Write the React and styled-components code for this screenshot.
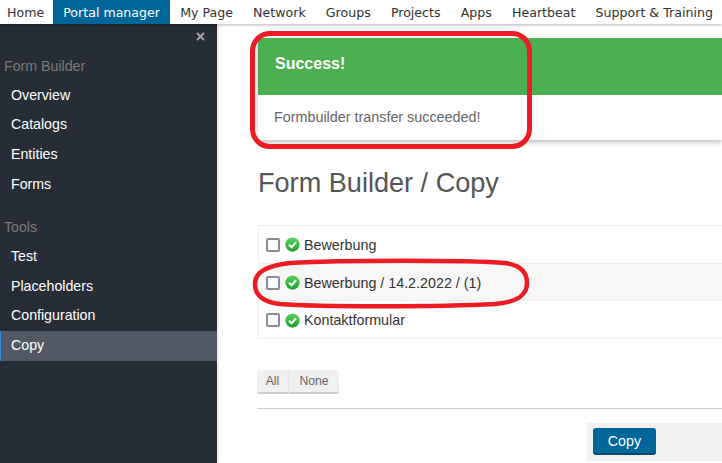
import React from 'react';
import styled, { createGlobalStyle } from 'styled-components';

const GlobalStyle = createGlobalStyle`
  html, body {
    margin: 0;
    padding: 0;
    height: 100%;
    overflow: hidden;
    background: #fff;
    font-family: "Liberation Sans", Arial, sans-serif;
  }
`;

const Page = styled.div`
  position: relative;
  width: 722px;
  height: 463px;
  overflow: hidden;
`;

const TopBar = styled.nav`
  position: relative;
  z-index: 2;
  display: flex;
  height: 24px;
  background: #fff;
  box-shadow: 0 1px 3px rgba(0, 0, 0, 0.3);
  font-family: "DejaVu Sans", Verdana, sans-serif;
  font-size: 12.6px;
  white-space: nowrap;
`;

const TopLink = styled.a`
  display: flex;
  align-items: center;
  padding: 0 ${props => props.$first ? '9px' : '10.15px'} 0 ${props => props.$first ? '7px' : '10px'};
  color: ${props => props.$active ? '#fff' : '#333'};
  background: ${props => props.$active ? '#006699' : 'transparent'};
`;

const Body = styled.div`
  display: flex;
  height: 439px;
`;

const Sidebar = styled.aside`
  position: relative;
  flex: 0 0 217px;
  box-sizing: border-box;
  padding-top: 26.7px;
  background: #262d36;
  box-shadow: 1px 0 4px rgba(0, 0, 0, 0.12);
`;

const CloseIcon = styled.svg`
  position: absolute;
  top: 8px;
  right: 12px;
  width: 9px;
  height: 9px;
`;

const SectionTitle = styled.div`
  height: 30px;
  margin-top: ${props => props.$gap || '0'};
  padding-left: 4px;
  font-size: 14.2px;
  line-height: 30px;
  color: #7b7b7b;
`;

const SideLink = styled.a`
  display: block;
  height: 29.7px;
  padding-left: ${props => props.$active ? '10px' : '11px'};
  border-left: ${props => props.$active ? '1px solid #2a93d5' : '0'};
  background: ${props => props.$active ? '#525964' : 'transparent'};
  font-size: 14.2px;
  line-height: 29px;
  color: #fff;
`;

const Main = styled.main`
  flex: 1;
  min-width: 0;
  padding: 14px 0 0 41px;
`;

const Alert = styled.section`
  height: 102px;
  background: #fff;
  box-shadow: 0 2px 5px rgba(0, 0, 0, 0.28);
`;

const AlertHead = styled.div`
  height: 57px;
  padding-left: 17px;
  background: #4caf50;
  font-size: 16px;
  font-weight: bold;
  line-height: 51px;
  color: #fff;
`;

const AlertBody = styled.div`
  padding-left: 16px;
  font-size: 14.35px;
  line-height: 44px;
  color: #666;
`;

const Title = styled.h1`
  margin: 27px 0 0;
  font-size: 27.1px;
  font-weight: normal;
  line-height: 32px;
  color: #555;
`;

const FormList = styled.ul`
  margin: 26px 0 0;
  padding: 0;
  list-style: none;
  border: 1px solid #eee;
  border-right: 0;
`;

const FormRow = styled.li`
  display: flex;
  align-items: center;
  box-sizing: border-box;
  height: 37.3px;
  padding: ${props => props.$first ? '0' : '2px'} 0 0 7px;
  background: ${props => props.$shaded ? '#f7f7f7' : '#fff'};
  border-top: ${props => props.$shaded ? '1px solid #eee' : '0'};
  border-bottom: ${props => props.$shaded ? '1px solid #eee' : '0'};
  font-size: 14.3px;
  color: #333;
`;

const CheckBox = styled.span`
  flex: 0 0 auto;
  box-sizing: border-box;
  width: 14px;
  height: 14px;
  margin-right: 5px;
  border: 2px solid #8a8a9a;
  border-radius: 2px;
  background: #fff;
`;

const StatusIcon = styled.svg`
  flex: 0 0 auto;
  width: 15px;
  height: 15px;
  margin-right: 4px;
`;

const ButtonGroup = styled.div`
  display: inline-flex;
  margin: 31px 0 0 -1px;
  vertical-align: top;
`;

const GroupButton = styled.button`
  box-sizing: border-box;
  height: 24px;
  width: ${props => props.$width};
  padding: 0;
  border: 0;
  border-right: ${props => props.$divider ? '1px solid #e6e6e6' : '0'};
  border-bottom: 2px solid #ccc;
  border-radius: ${props => props.$divider ? '3px 0 0 3px' : '0 3px 3px 0'};
  background: #f0f0f0;
  font-family: inherit;
  font-size: 12.2px;
  color: #666;
`;

const Divider = styled.hr`
  height: 1px;
  margin: 14px 0 0 -1px;
  border: 0;
  background: #ccc;
`;

const ActionBar = styled.div`
  display: flex;
  align-items: center;
  height: 38px;
  margin: 14px 0 0 329px;
  padding-left: 6px;
  background: #f1f1f1;
`;

const PrimaryButton = styled.button`
  box-sizing: border-box;
  width: 63px;
  height: 27px;
  padding: 0;
  border: 0;
  border-bottom: 2px solid #004a70;
  border-radius: 3px;
  background: #006699;
  font-family: inherit;
  font-size: 14.3px;
  color: #fff;
`;

const AlertMark = styled.div`
  position: absolute;
  z-index: 3;
  left: 250px;
  top: 31px;
  width: 282px;
  height: 118px;
  box-sizing: border-box;
  border: 5px solid #ed1c24;
  border-radius: 20px;
  pointer-events: none;
`;

const RowMark = styled.svg`
  position: absolute;
  z-index: 3;
  left: 250px;
  top: 258px;
  width: 282px;
  height: 52px;
  pointer-events: none;
`;

const topLinks = ['Home', 'Portal manager', 'My Page', 'Network', 'Groups', 'Projects', 'Apps', 'Heartbeat', 'Support & Training'];
const forms = ['Bewerbung', 'Bewerbung / 14.2.2022 / (1)', 'Kontaktformular'];

const GreenCheck = () => (
  <StatusIcon viewBox="0 0 16 16">
    <defs>
      <linearGradient id="okFill" x1="0" y1="0" x2="0" y2="1">
        <stop offset="0" stopColor="#5fd35f" />
        <stop offset="1" stopColor="#14a02c" />
      </linearGradient>
    </defs>
    <circle cx="8" cy="8" r="7.6" fill="url(#okFill)" />
    <path d="M4.3 8.2 7 10.9 11.8 5.6" fill="none" stroke="#fff" strokeWidth="2.2" />
  </StatusIcon>
);

const App = () => (
  <Page>
    <GlobalStyle />
    <TopBar>
      {topLinks.map((label, i) => (
        <TopLink key={label} $first={i === 0} $active={label === 'Portal manager'}>{label}</TopLink>
      ))}
    </TopBar>
    <Body>
      <Sidebar>
        <CloseIcon viewBox="0 0 9 9">
          <path d="M1 1 8 8M8 1 1 8" stroke="#a5a9ae" strokeWidth="1.8" />
        </CloseIcon>
        <SectionTitle>Form Builder</SectionTitle>
        <SideLink>Overview</SideLink>
        <SideLink>Catalogs</SideLink>
        <SideLink>Entities</SideLink>
        <SideLink>Forms</SideLink>
        <SectionTitle $gap="12.4px">Tools</SectionTitle>
        <SideLink>Test</SideLink>
        <SideLink>Placeholders</SideLink>
        <SideLink>Configuration</SideLink>
        <SideLink $active>Copy</SideLink>
      </Sidebar>
      <Main>
        <Alert>
          <AlertHead>Success!</AlertHead>
          <AlertBody>Formbuilder transfer succeeded!</AlertBody>
        </Alert>
        <Title>Form Builder / Copy</Title>
        <FormList>
          {forms.map((name, i) => (
            <FormRow key={name} $first={i === 0} $shaded={i === 1}>
              <CheckBox />
              <GreenCheck />
              {name}
            </FormRow>
          ))}
        </FormList>
        <ButtonGroup>
          <GroupButton $width="32px" $divider>All</GroupButton>
          <GroupButton $width="50px">None</GroupButton>
        </ButtonGroup>
        <Divider />
        <ActionBar>
          <PrimaryButton>Copy</PrimaryButton>
        </ActionBar>
      </Main>
    </Body>
    <AlertMark />
    <RowMark viewBox="0 0 282 52">
      <path
        d="M5 26C5 14 16 8 40 5 90 2 220 2 255 5 270 7 277 14 277 25 277 37 268 44 245 46 190 49 70 49 30 46 12 44 5 36 5 26Z"
        fill="none"
        stroke="#ed1c24"
        strokeWidth="4.5"
      />
    </RowMark>
  </Page>
);

export default App;
